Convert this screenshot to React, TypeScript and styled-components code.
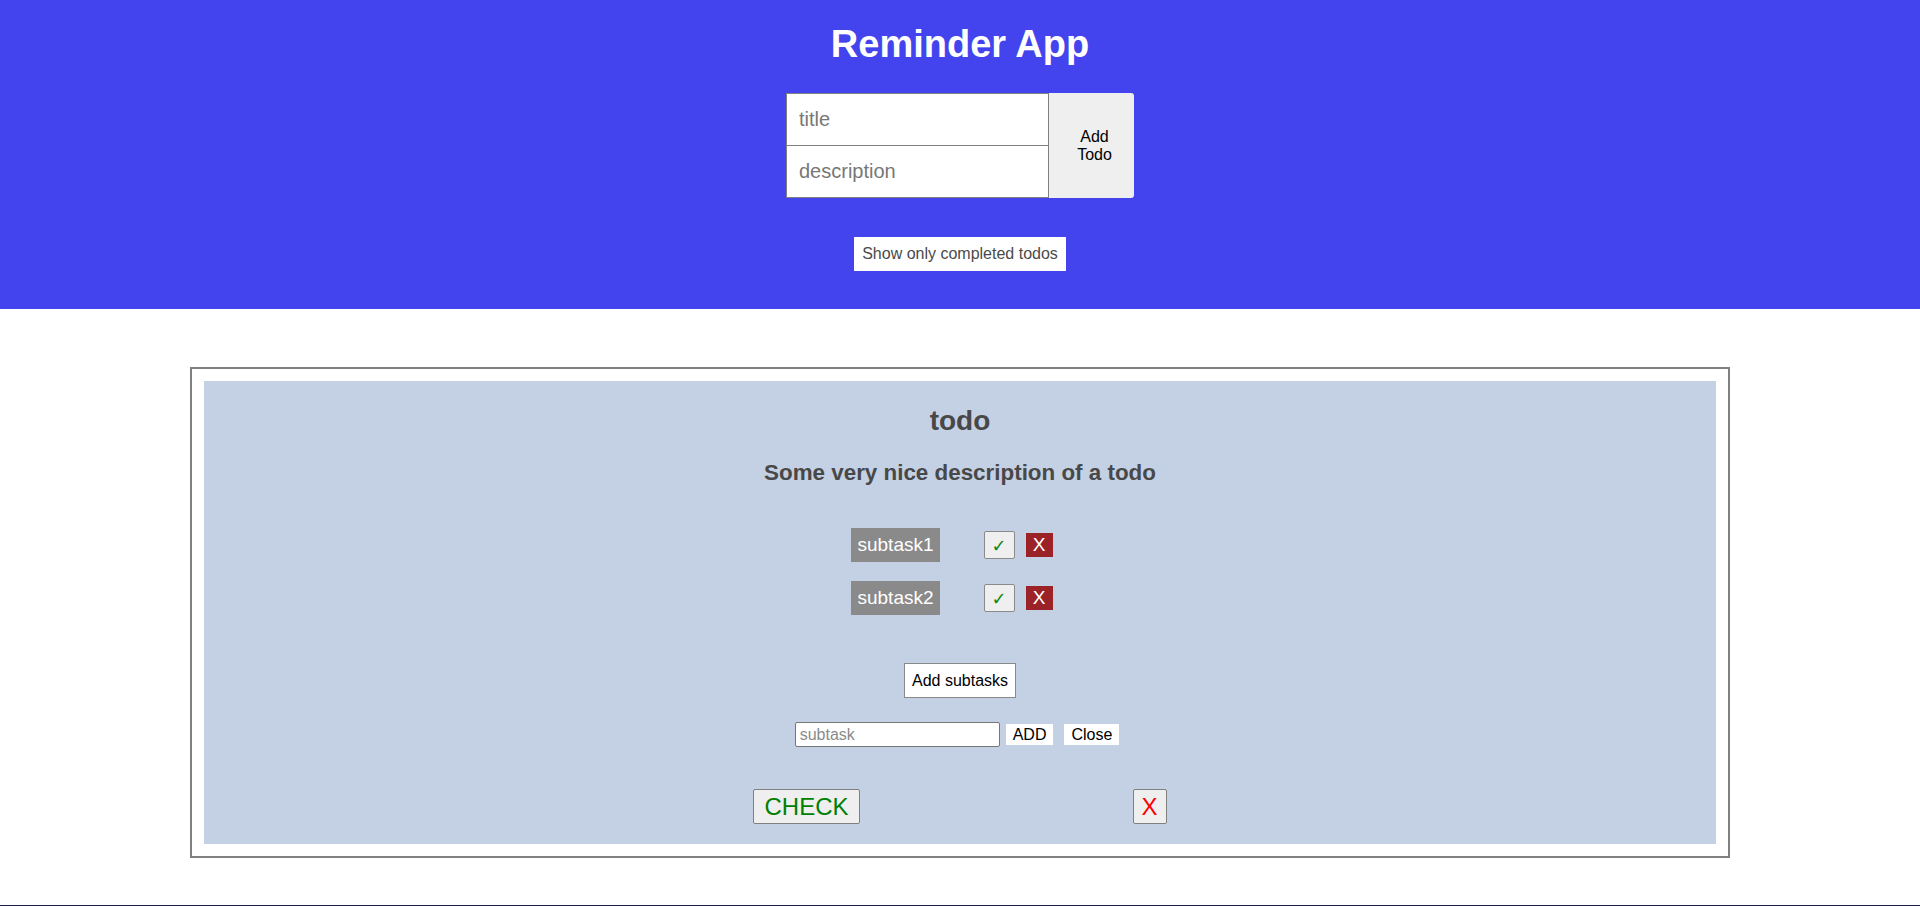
import styled, { createGlobalStyle } from 'styled-components';

const GlobalStyle = createGlobalStyle`
	html, body {
		margin: 0;
		padding: 0;
		background: #ffffff;
		font-family: 'Liberation Sans', Arial, sans-serif;
	}
	* {
		box-sizing: border-box;
	}
`;

const Header = styled.header`
	background-color: #4444ee;
	height: 309px;
	display: flex;
	flex-direction: column;
	align-items: center;
	padding-top: 22px;
`;

const Title = styled.h1`
	margin: 0;
	color: #ffffff;
	font-size: 38px;
	font-weight: bold;
	line-height: 44px;
`;

const Form = styled.div`
	display: flex;
	margin-top: 27px;
`;

const Inputs = styled.div`
	display: flex;
	flex-direction: column;
`;

const TextInput = styled.input<{ $first?: boolean }>`
	width: 263px;
	height: 53px;
	margin: 0;
	margin-top: ${({ $first }) => ($first ? '0' : '-1px')};
	border: 1px solid #808080;
	padding: 0 12px;
	font-family: inherit;
	font-size: 20px;
	color: #333;
	background: #fff;
	outline: none;
	&::placeholder {
		color: #777;
	}
`;

const AddTodoButton = styled.button`
	width: 85px;
	height: 105px;
	border: none;
	border-radius: 0 3px 3px 0;
	background: #efefef;
	font-family: inherit;
	font-size: 16px;
	line-height: 18px;
	color: #000;
	padding: 0 14px 0 20px;
`;

const FilterButton = styled.button`
	margin-top: 39px;
	height: 34px;
	padding: 0 8px;
	border: none;
	background: #ffffff;
	font-family: inherit;
	font-size: 16px;
	color: #4a4a4a;
`;

const Main = styled.main`
	padding-top: 58px;
	padding-bottom: 47px;
`;

const Card = styled.section`
	width: 1540px;
	margin: 0 auto;
	border: 2px solid #808080;
	padding: 12px;
`;

const CardBody = styled.div`
	background-color: #c4d0e3;
	display: flex;
	flex-direction: column;
	align-items: center;
	padding: 24px 0 20px;
	color: #484848;
`;

const TodoTitle = styled.h2`
	margin: 0;
	font-size: 28px;
	line-height: 32px;
	font-weight: bold;
`;

const TodoDescription = styled.h3`
	margin: 23px 0 0;
	font-size: 22.4px;
	line-height: 25px;
	font-weight: bold;
`;

const SubtaskList = styled.ul`
	list-style: none;
	margin: 43px 0 0;
	padding: 0;
	display: flex;
	flex-direction: column;
	gap: 19px;
`;

const SubtaskRow = styled.li`
	display: flex;
	align-items: center;
	margin-right: 16px;
`;

const SubtaskLabel = styled.span`
	display: inline-flex;
	align-items: center;
	height: 34px;
	padding: 0 6px;
	background: #8a8a8a;
	color: #ffffff;
	font-size: 19px;
`;

const SmallCheck = styled.button`
	margin-left: 44px;
	width: 31px;
	height: 28px;
	padding: 0;
	border: 1px solid #8a8a8a;
	border-radius: 2px;
	background: #efefef;
	color: #118811;
	font-size: 18px;
	font-family: 'DejaVu Sans', sans-serif;
`;

const SmallDelete = styled.button`
	margin-left: 11px;
	width: 27px;
	height: 24px;
	padding: 0;
	border: none;
	background: #9b2226;
	color: #ffffff;
	font-family: inherit;
	font-size: 19px;
`;

const OutlineButton = styled.button`
	margin-top: 48px;
	height: 35px;
	padding: 0 7px;
	border: 1px solid #8a8a8a;
	background: #ffffff;
	font-family: inherit;
	font-size: 16px;
	color: #000;
`;

const AddRow = styled.div`
	margin-top: 24px;
	display: flex;
	align-items: center;
	margin-right: 6px;
`;

const SubtaskInput = styled.input`
	width: 205px;
	height: 25px;
	border: 1px solid #767676;
	border-radius: 2px;
	padding: 0 4px;
	font-family: inherit;
	font-size: 16px;
	background: #fff;
	&::placeholder {
		color: #8a8a8a;
	}
`;

const PlainButton = styled.button<{ $gap: number }>`
	margin-left: ${({ $gap }) => $gap}px;
	height: 21px;
	padding: 0 7px;
	border: none;
	background: #ffffff;
	font-family: inherit;
	font-size: 16px;
	color: #000;
`;

const ActionRow = styled.div`
	margin-top: 42px;
	display: flex;
	gap: 273px;
`;

const ActionButton = styled.button<{ $color: string; $pad: number }>`
	height: 35px;
	padding: 0 ${({ $pad }) => $pad}px;
	border: 1px solid #808080;
	border-radius: 2px;
	background: #efefef;
	color: ${({ $color }) => $color};
	font-family: inherit;
	font-size: 24px;
`;

const Footer = styled.footer`
	height: 40px;
	background: #1e1b4b;
`;

const subtasks = ['subtask1', 'subtask2'];

export default function App() {
	return (
		<>
			<GlobalStyle />
			<Header>
				<Title>Reminder App</Title>
				<Form>
					<Inputs>
						<TextInput $first placeholder="title" />
						<TextInput placeholder="description" />
					</Inputs>
					<AddTodoButton>Add Todo</AddTodoButton>
				</Form>
				<FilterButton>Show only completed todos</FilterButton>
			</Header>
			<Main>
				<Card>
					<CardBody>
						<TodoTitle>todo</TodoTitle>
						<TodoDescription>Some very nice description of a todo</TodoDescription>
						<SubtaskList>
							{subtasks.map((s) => (
								<SubtaskRow key={s}>
									<SubtaskLabel>{s}</SubtaskLabel>
									<SmallCheck>✓</SmallCheck>
									<SmallDelete>X</SmallDelete>
								</SubtaskRow>
							))}
						</SubtaskList>
						<OutlineButton>Add subtasks</OutlineButton>
						<AddRow>
							<SubtaskInput placeholder="subtask" />
							<PlainButton $gap={6}>ADD</PlainButton>
							<PlainButton $gap={11}>Close</PlainButton>
						</AddRow>
						<ActionRow>
							<ActionButton $color="#008000" $pad={10}>CHECK</ActionButton>
							<ActionButton $color="#ff0000" $pad={8}>X</ActionButton>
						</ActionRow>
					</CardBody>
				</Card>
			</Main>
			<Footer />
		</>
	);
}
